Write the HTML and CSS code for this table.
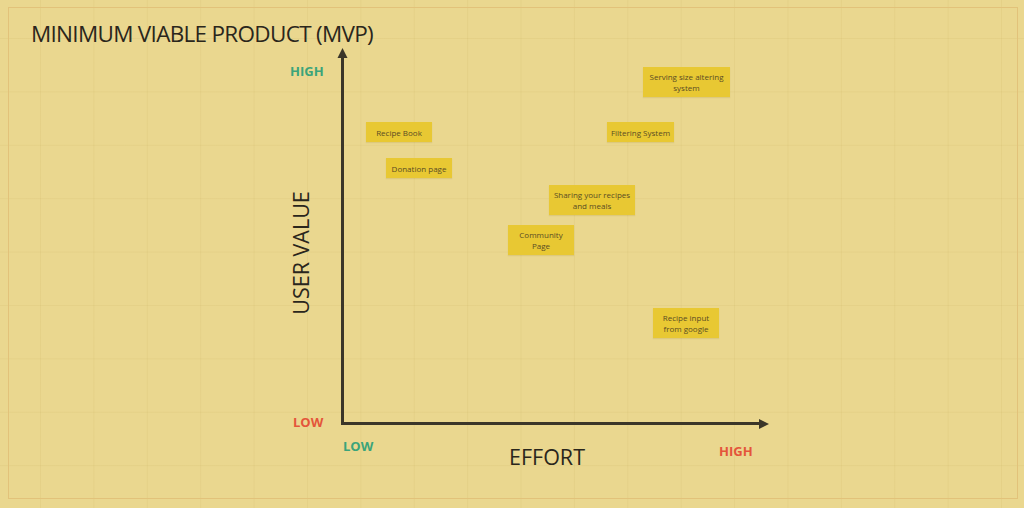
FILE: index.html
```html
<!DOCTYPE html>
<html>
<head>
<meta charset="utf-8">
<link rel="stylesheet" href="styles.css">
</head>
<body>
<div class="board">
  <div class="frame"></div>
  <h1 class="title">MINIMUM VIABLE PRODUCT (MVP)</h1>
  <svg class="axes" width="1024" height="508" viewBox="0 0 1024 508">
    <path d="M342.5 423.5 V56" stroke="#3b3629" stroke-width="3" fill="none"/>
    <path d="M342.5 48 L337.5 58 L347.5 58 Z" fill="#3b3629"/>
    <path d="M341 423.5 H760" stroke="#3b3629" stroke-width="3" fill="none"/>
    <path d="M769 424 L759 419 L759 429 Z" fill="#3b3629"/>
  </svg>
  <span class="lbl green y-high">HIGH</span>
  <span class="lbl red y-low">LOW</span>
  <span class="lbl green x-low">LOW</span>
  <span class="lbl red x-high">HIGH</span>
  <span class="axis-name effort">EFFORT</span>
  <span class="axis-name uservalue">USER VALUE</span>

  <div class="note n-book">Recipe Book</div>
  <div class="note n-donation">Donation page</div>
  <div class="note n-sharing">Sharing your recipes and meals</div>
  <div class="note n-community">Community Page</div>
  <div class="note n-filter">Filtering System</div>
  <div class="note n-serving">Serving size altering system</div>
  <div class="note n-google">Recipe input from google</div>
</div>
</body>
</html>
```
FILE: styles.css
```css
* { box-sizing: border-box; }
html, body { margin: 0; padding: 0; }
body {
  width: 1024px;
  height: 508px;
  overflow: hidden;
  font-family: "Open Sans", "Noto Sans", sans-serif;
}
.board {
  position: relative;
  width: 1024px;
  height: 508px;
  background-color: #ead78f;
  background-image:
    linear-gradient(to right, rgba(205, 180, 100, 0.18) 1px, transparent 1px),
    linear-gradient(to bottom, rgba(205, 180, 100, 0.18) 1px, transparent 1px);
  background-size: 53.4px 53.4px;
  background-position: 40px 38px;
}
.frame {
  position: absolute;
  left: 8px;
  top: 7px;
  width: 1010px;
  height: 492px;
  border: 1px solid #e2c27a;
}
.title {
  position: absolute;
  left: 31px;
  top: 18px;
  margin: 0;
  font-size: 22.5px;
  font-weight: 400;
  letter-spacing: -0.7px;
  line-height: 32px;
  color: #2a261c;
  white-space: nowrap;
}
.axes { position: absolute; left: 0; top: 0; }
.lbl {
  position: absolute;
  font-size: 13px;
  font-weight: 700;
  line-height: 18px;
}
.green { color: #3ba47a; }
.red { color: #e4553a; }
.y-high { left: 290px; top: 62px; }
.y-low { left: 293px; top: 413px; }
.x-low { left: 343px; top: 437px; }
.x-high { left: 719px; top: 442px; }
.axis-name {
  position: absolute;
  font-size: 21.5px;
  line-height: 28px;
  color: #2a261c;
  white-space: nowrap;
}
.effort { left: 509px; top: 443px; }
.uservalue {
  left: 301px;
  top: 253px;
  transform: translate(-50%, -50%) rotate(-90deg);
}
.note {
  position: absolute;
  background: #e8c833;
  color: #5a4c24;
  font-size: 8px;
  line-height: 11px;
  display: flex;
  align-items: center;
  justify-content: center;
  text-align: center;
  padding: 0 4px;
  box-shadow: 0 1px 1px rgba(150, 120, 30, 0.15);
}
.n-book { left: 366px; top: 122px; width: 66px; height: 20px; }
.n-donation { left: 386px; top: 158px; width: 66px; height: 20px; }
.n-filter { left: 607px; top: 122px; width: 67px; height: 20px; padding: 0; white-space: nowrap; }
.n-sharing { left: 549px; top: 185px; width: 86px; height: 30px; }
.n-community { left: 508px; top: 225px; width: 66px; height: 30px; padding: 0 10px; }
.n-serving { left: 643px; top: 67px; width: 87px; height: 30px; padding: 0 6px; }
.n-google { left: 653px; top: 308px; width: 66px; height: 30px; }
```
